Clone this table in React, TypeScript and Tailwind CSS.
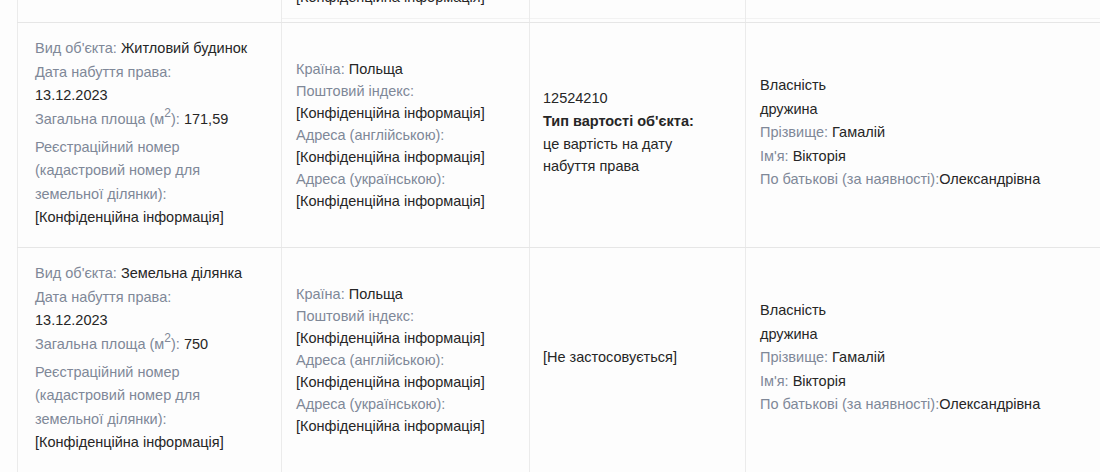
import React from "react";

const L = ({ children }: { children: React.ReactNode }) => <span className="text-[#7f8898]">{children}</span>;

function ObjectCell({ kind, area }: { kind: string; area: string }) {
  return (
    <div className="leading-[23.4px]">
      <div>
        <L>Вид об'єкта:</L> {kind}
      </div>
      <div>
        <L>Дата набуття права:</L>
      </div>
      <div>13.12.2023</div>
      <div>
        <L>
          Загальна площа (м<span className="relative -top-[7px] text-[12px]">2</span>):
        </L>{" "}
        {area}
      </div>
      <div className="mt-[4px]">
        <L>
          Реєстраційний номер
          <br />
          (кадастровий номер для
          <br />
          земельної ділянки):
        </L>
        <br />
        [Конфіденційна інформація]
      </div>
    </div>
  );
}

function AddressCell() {
  return (
    <div className="leading-[22.1px]">
      <div>
        <L>Країна:</L> Польща
      </div>
      <div>
        <L>Поштовий індекс:</L>
      </div>
      <div>[Конфіденційна інформація]</div>
      <div>
        <L>Адреса (англійською):</L>
      </div>
      <div>[Конфіденційна інформація]</div>
      <div>
        <L>Адреса (українською):</L>
      </div>
      <div>[Конфіденційна інформація]</div>
    </div>
  );
}

function OwnerCell() {
  return (
    <div className="leading-[23.5px]">
      <div>Власність</div>
      <div>дружина</div>
      <div>
        <L>Прізвище:</L> Гамалій
      </div>
      <div>
        <L>Ім'я:</L> Вікторія
      </div>
      <div>
        <L>По батькові (за наявності):</L>Олександрівна
      </div>
    </div>
  );
}

function Row({ c1, c2, c3, c4 }: { c1: React.ReactNode; c2: React.ReactNode; c3: React.ReactNode; c4: React.ReactNode }) {
  return (
    <div className="flex h-[225px] border-t border-[#e6e6e6]">
      <div className="flex w-[264px] shrink-0 items-center border-l border-[#ebebeb] pb-[3px] pl-[17px] pr-2">{c1}</div>
      <div className="flex w-[248px] shrink-0 items-center border-l border-[#ebebeb] pl-[14px] pr-2">{c2}</div>
      <div className="flex w-[216px] shrink-0 items-center border-l border-[#ebebeb] pb-[5px] pl-[13px] pr-2">{c3}</div>
      <div className="flex flex-1 items-center border-l border-[#ebebeb] pb-[4px] pl-[14px] pr-2">{c4}</div>
    </div>
  );
}

export default function App() {
  return (
    <div
      className="h-[472px] w-[1100px] overflow-hidden bg-[#fdfdfd] text-[14.5px] text-[#262626]"
      style={{ fontFamily: '"Liberation Sans", Arial, sans-serif' }}
    >
      <div className="ml-[17px]">
        {/* tail of the previous row, scrolled off */}
        <div className="flex h-[22px]">
          <div className="w-[264px] shrink-0 border-l border-[#ebebeb]" />
          <div className="relative w-[248px] shrink-0 overflow-hidden border-l border-[#ebebeb] pl-[14px]">
            <div className="absolute bottom-[14px] left-[14px] leading-[22px]">[Конфіденційна інформація]</div>
            <div className="absolute bottom-[3px] left-0 right-0 border-b border-[#f2f2f2]" />
          </div>
          <div className="relative w-[216px] shrink-0 border-l border-[#ebebeb]">
            <div className="absolute bottom-[3px] left-0 right-0 border-b border-[#f2f2f2]" />
          </div>
          <div className="relative flex-1 border-l border-[#ebebeb]">
            <div className="absolute bottom-[3px] left-0 right-0 border-b border-[#f2f2f2]" />
          </div>
        </div>
        <Row
          c1={<ObjectCell kind="Житловий будинок" area="171,59" />}
          c2={<AddressCell />}
          c3={
            <div className="leading-[22.7px]">
              <div>12524210</div>
              <div className="font-bold">Тип вартості об'єкта:</div>
              <div>
                це вартість на дату
                <br />
                набуття права
              </div>
            </div>
          }
          c4={<OwnerCell />}
        />
        <Row
          c1={<ObjectCell kind="Земельна ділянка" area="750" />}
          c2={<AddressCell />}
          c3={<div>[Не застосовується]</div>}
          c4={<OwnerCell />}
        />
      </div>
    </div>
  );
}
